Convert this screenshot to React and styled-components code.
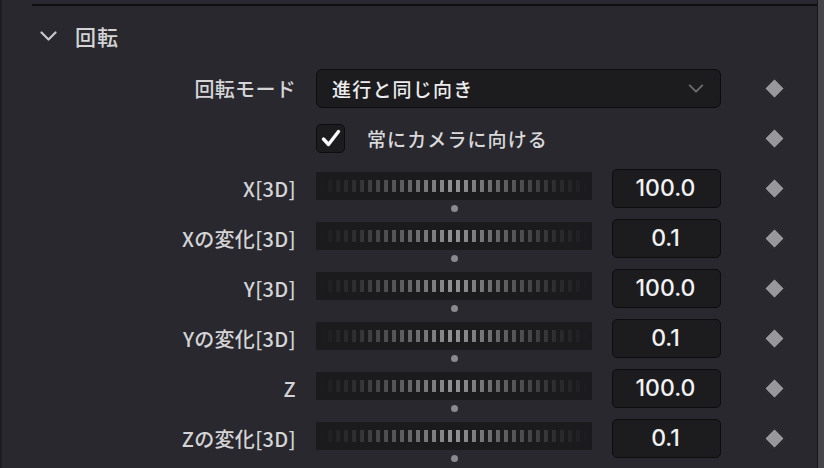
import styled, { createGlobalStyle } from 'styled-components'

const GlobalStyle = createGlobalStyle`
    html, body {
        margin: 0;
        padding: 0;
        background: #28282e;
    }
    body {
        font-family: "Noto Sans CJK JP", "Noto Sans", sans-serif;
    }
`

// subComponents
const Chevron = ({ color = '#c9c9cc', w = 17, h = 10, sw = 2.2 }) => (
    <svg width={w} height={h} viewBox="0 0 17 10" fill="none">
        <polyline points="1.5,1.5 8.5,8.5 15.5,1.5" stroke={color} strokeWidth={sw} strokeLinecap="round" strokeLinejoin="round" />
    </svg>
)

const Check = () => (
    <svg width="20" height="18" viewBox="0 0 20 18" fill="none">
        <polyline points="2.5,10 7.5,15.5 17.5,2.5" stroke="#fafafa" strokeWidth="3.4" strokeLinecap="round" strokeLinejoin="round" />
    </svg>
)

// eslint-disable-next-line react/prop-types
const SliderRow = ({ label, value }) => (
    <Row>
        <Label>{label}</Label>
        <Controls>
            <JogBlock>
                <Jog><Ticks /></Jog>
                <Dot />
            </JogBlock>
            <ValueBox>{value}</ValueBox>
        </Controls>
        <KeyCell><Keyframe /></KeyCell>
    </Row>
)

//mainComponent
const App = () => {
    const sliders = [
        ['X[3D]', '100.0'],
        ['Xの変化[3D]', '0.1'],
        ['Y[3D]', '100.0'],
        ['Yの変化[3D]', '0.1'],
        ['Z', '100.0'],
        ['Zの変化[3D]', '0.1'],
    ]
    return (
        <Page>
            <GlobalStyle />
            <LeftEdge />
            <Main>
                <Rule />
                <SectionHeader>
                    <Chevron />
                    <SectionTitle>回転</SectionTitle>
                </SectionHeader>
                <Row>
                    <Label>回転モード</Label>
                    <Select>
                        <span>進行と同じ向き</span>
                        <Chevron color="#6e6e72" w={16} h={9} sw={2} />
                    </Select>
                    <KeyCell><Keyframe /></KeyCell>
                </Row>
                <Row>
                    <span />
                    <CheckLine>
                        <CheckBox><Check /></CheckBox>
                        <CheckLabel>常にカメラに向ける</CheckLabel>
                    </CheckLine>
                    <KeyCell><Keyframe /></KeyCell>
                </Row>
                {sliders.map(([label, value]) => (
                    <SliderRow key={label} label={label} value={value} />
                ))}
            </Main>
            <Scrollbar />
        </Page>
    )
}

export default App

//styles
const Page = styled.div`
    display: flex;
    width: 824px;
    height: 468px;
    overflow: hidden;
    background: #28282e;
    color: #d2d2d4;
`
const LeftEdge = styled.div`
    width: 2px;
    background: #1d1d21;
`
const Main = styled.div`
    flex: 1;
    display: flex;
    flex-direction: column;
    padding-top: 4px;
`
const Rule = styled.div`
    height: 2px;
    margin: 0 0 0 30px;
    background: #0f0f11;
`
const SectionHeader = styled.div`
    display: flex;
    align-items: center;
    gap: 18px;
    height: 57px;
    padding-left: 38px;
    padding-top: 2px;
    box-sizing: border-box;
`
const SectionTitle = styled.span`
    font-size: 21px;
    font-weight: 500;
    color: #d4d4d6;
    letter-spacing: 1px;
`
const Row = styled.div`
    display: grid;
    grid-template-columns: 293px 405px 64px;
    column-gap: 21px;
    align-items: center;
    height: 50px;
`
const Label = styled.div`
    text-align: right;
    font-size: 20px;
    font-weight: 500;
    letter-spacing: 0.3px;
    margin-right: -1px;
    color: #d4d4d6;
    white-space: nowrap;
`
const Select = styled.div`
    display: flex;
    align-items: center;
    justify-content: space-between;
    height: 39px;
    box-sizing: border-box;
    padding: 0 16px 0 15px;
    background: #1c1c1f;
    border: 1px solid #0d0d0f;
    border-radius: 6px;
    font-size: 19px;
    font-weight: 500;
    letter-spacing: 1.2px;
    color: #ececee;
`
const KeyCell = styled.div`
    display: flex;
    justify-content: center;
`
const Keyframe = styled.div`
    flex: none;
    width: 15px;
    height: 15px;
    box-sizing: border-box;
    background: #97979c;
    border: 1.5px solid #0e0e10;
    transform: rotate(45deg);
`
const CheckLine = styled.div`
    display: flex;
    align-items: center;
    gap: 22px;
`
const CheckBox = styled.div`
    display: flex;
    align-items: center;
    justify-content: center;
    width: 29px;
    height: 29px;
    box-sizing: border-box;
    background: #1c1c1f;
    border: 1px solid #0d0d0f;
    border-radius: 5px;
`
const CheckLabel = styled.span`
    font-size: 19px;
    font-weight: 500;
    letter-spacing: 1.1px;
    color: #d8d8da;
`
const Controls = styled.div`
    display: flex;
    align-items: center;
    gap: 20px;
`
const JogBlock = styled.div`
    display: flex;
    flex-direction: column;
    align-items: center;
    gap: 5px;
    margin-top: 8px;
`
const Jog = styled.div`
    width: 276px;
    height: 28px;
    background: #1b1b1d;
    display: flex;
    align-items: center;
    justify-content: center;
`
const Ticks = styled.div`
    width: 268px;
    height: 12px;
    background:
        linear-gradient(90deg,
            #1b1b1d 0%,
            rgba(27, 27, 29, 0.85) 12%,
            rgba(27, 27, 29, 0.5) 28%,
            rgba(27, 27, 29, 0) 50%,
            rgba(27, 27, 29, 0.5) 72%,
            rgba(27, 27, 29, 0.85) 88%,
            #1b1b1d 100%),
        repeating-linear-gradient(90deg, #939396 0 4px, transparent 4px 8px);
`
const Dot = styled.div`
    width: 7px;
    height: 7px;
    border-radius: 50%;
    background: #8a8a8d;
`
const ValueBox = styled.div`
    display: flex;
    align-items: center;
    justify-content: center;
    width: 109px;
    height: 39px;
    box-sizing: border-box;
    padding-right: 2px;
    background: #1c1c1f;
    border: 1px solid #0d0d0f;
    border-radius: 5px;
    font-family: Inter, "Noto Sans", sans-serif;
    font-size: 23px;
    font-weight: 500;
    color: #f2f2f4;
`
const Scrollbar = styled.div`
    width: 6px;
    border-left: 1px solid #161618;
    background: #46464a;
`
